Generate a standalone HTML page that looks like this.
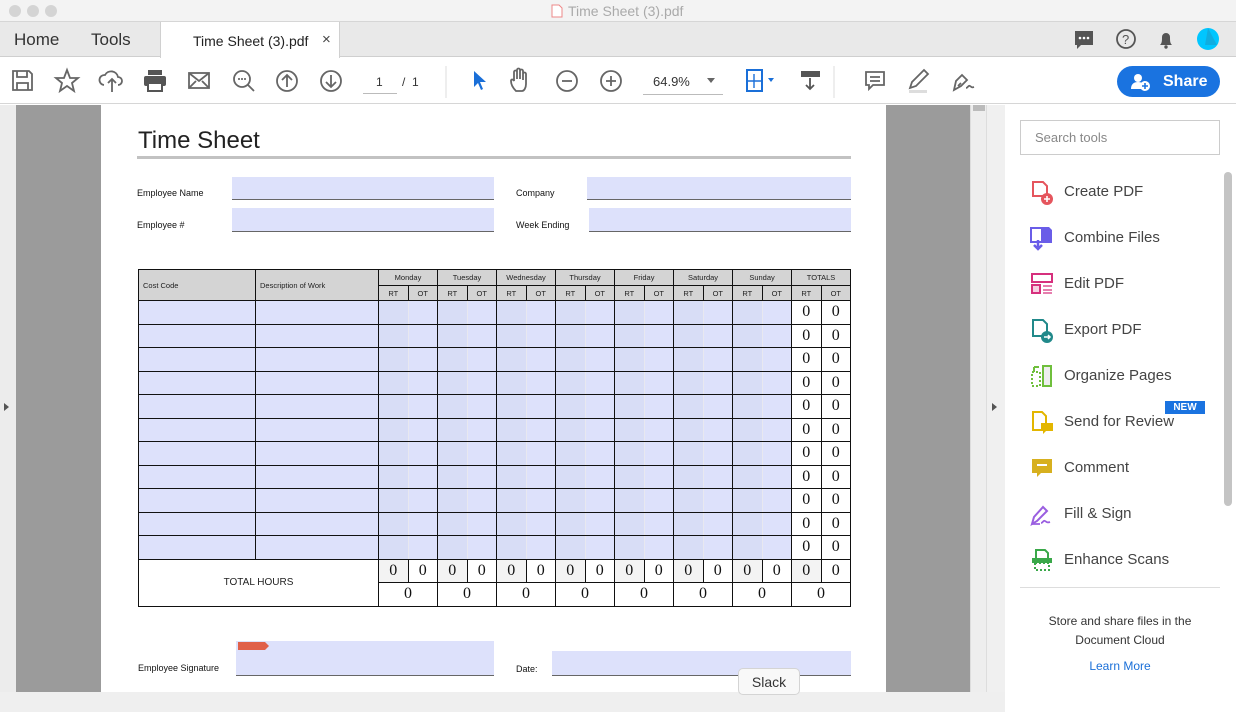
<!DOCTYPE html>
<html><head><meta charset="utf-8"><style>
*{margin:0;padding:0;box-sizing:border-box}
body{width:1236px;height:712px;overflow:hidden;position:relative;background:#fff;font-family:"Liberation Sans",sans-serif;color:#333}
.a{position:absolute}
#title{top:0;left:0;width:1236px;height:22px;background:#f3f3f3;border-bottom:1px solid #d6d6d6}
.dot{width:12px;height:12px;border-radius:50%;background:#d4d4d4;top:5px}
#tabs{top:22px;left:0;width:1236px;height:35px;background:#e9e9e9;border-bottom:1px solid #cfcfcf}
#tab{top:22px;left:160px;width:180px;height:36px;background:#fff;border-left:1px solid #d0d0d0;border-right:1px solid #d0d0d0}
#tb{top:58px;left:0;width:1236px;height:46px;background:#fff;border-bottom:1px solid #d6d6d6}
.ic{stroke:#666;fill:none;stroke-width:1.8}
#gray{top:105px;left:16px;width:954px;height:607px;background:#9b9b9b}
#page{top:105px;left:101px;width:785px;height:588px;background:#fff}
.lab{font-size:9px;color:#111}
.fld{background:#dde1fb;border-bottom:1px solid #666}
table{border-collapse:collapse;position:absolute;left:138px;top:269px;table-layout:fixed;width:713px}
td{border:1px solid #111;font-size:7.5px;color:#222;padding:0}
.h1 td{height:16px;background:#d4d4d4;text-align:center}
.h2 td{height:15px;background:#d4d4d4;text-align:center}
.b td{height:23.5px}
.f{background:#dde1fb}
.r{background:#d8ddf6;border-right:none}
.o{background:#dde1fb;border-left:1px solid #e8e8f0}
.z{font-family:"Liberation Serif",serif;font-size:16px;text-align:center;color:#111;background:#fff}
.zg{background:#f3f3f3}
#rp{top:105px;left:1005px;width:231px;height:607px;background:#fff}
.ti{left:1030px;font-size:15px;color:#444}
.ti span{position:absolute;left:34px;top:0;white-space:nowrap}
</style></head><body>
<div id="title" class="a"></div>
<div class="a" style="left:568px;top:3px;font-size:14px;color:#aaa">Time Sheet (3).pdf</div>
<div class="a dot" style="left:9px"></div><div class="a dot" style="left:27px"></div><div class="a dot" style="left:45px"></div>
<svg class="a" style="left:551px;top:4px" width="12" height="14"><path d="M1 1h7l3 3v9H1z" fill="#fff" stroke="#e88" /></svg>
<div id="tabs" class="a"></div>
<div id="tab" class="a"></div>
<div class="a" style="left:14px;top:30px;font-size:17px;color:#333">Home</div>
<div class="a" style="left:91px;top:30px;font-size:17px;color:#333">Tools</div>
<div class="a" style="left:193px;top:33px;font-size:14px;color:#222">Time Sheet (3).pdf</div>
<div class="a" style="left:322px;top:31px;font-size:15px;color:#444">×</div>
<svg class="a" style="left:1072px;top:28px" width="160" height="26">
<path d="M3 3h18v14h-12l-4 4v-4h-2z" fill="#555"/><circle cx="8" cy="10" r="1.3" fill="#fff"/><circle cx="12" cy="10" r="1.3" fill="#fff"/><circle cx="16" cy="10" r="1.3" fill="#fff"/>
<circle cx="54" cy="11" r="9" fill="none" stroke="#555" stroke-width="1.8"/><text x="50" y="16" font-size="13" fill="#555" font-family="Liberation Sans">?</text>
<path d="M88 17c2-2 2-4 2-8a4 4 0 0 1 8 0c0 4 0 6 2 8z" fill="#555"/><circle cx="94" cy="19" r="1.7" fill="#555"/>
<circle cx="136" cy="11" r="11" fill="#00c6ff"/><path d="M136 0l9 17h-12z" fill="#1a9ccc" opacity=".6"/>
</svg>
<div id="tb" class="a"></div>
<svg class="a" style="left:8px;top:66px" width="990" height="32">
<g class="ic" stroke="#aaa"><path d="M5 5h16l3 3v16H5z"/><path d="M9 5v6h10V5M9 24v-7h11v7"/></g>
<path class="ic" d="M59 4l3 8h8l-6 5 2 8-7-5-7 5 2-8-6-5h8z"/>
<g class="ic"><path d="M96 19a5 5 0 0 1 1-10 7 7 0 0 1 13 2 4 4 0 0 1 0 8M104 26V13M100 17l4-4 4 4"/></g>
<g fill="#555"><rect x="140" y="4" width="14" height="5"/><rect x="136" y="10" width="22" height="10" rx="2"/><rect x="140" y="17" width="14" height="8" fill="#fff" stroke="#555" stroke-width="2"/></g>
<g class="ic"><rect x="181" y="7" width="20" height="15"/><path d="M181 7l10 8 10-8M181 22l7-7M201 22l-7-7"/></g>
<g class="ic" stroke-width="2"><circle cx="234" cy="13" r="8"/><path d="M240 19l6 6"/></g><g fill="#555"><circle cx="231" cy="13" r="1"/><circle cx="234" cy="13" r="1"/><circle cx="237" cy="13" r="1"/></g>
<g class="ic" stroke="#bbb"><circle cx="279" cy="15" r="10"/><path d="M279 21V9M274 14l5-5 5 5"/><circle cx="323" cy="15" r="10"/><path d="M323 9v12M318 16l5 5 5-5"/></g>
<path d="M438 0v32" stroke="#ddd"/>
<path d="M466 5v16l4-4 3 7 2-1-3-7h6z" fill="#1a6fd8"/>
<path class="ic" d="M508 25c-3-3-5-7-5-10 0-2 2-2 3 0V6c0-2 3-2 3 0v7V4c0-2 3-2 3 0v9V5c0-2 3-2 3 0v9V8c0-2 3-2 3 0v10c0 4-2 7-4 7z"/>
<g class="ic"><circle cx="559" cy="15" r="10"/><path d="M554 15h10"/><circle cx="603" cy="15" r="10"/><path d="M598 15h10M603 10v10"/></g>
<g fill="#1a6fd8"><rect x="739" y="4" width="15" height="21" fill="none" stroke="#1a6fd8" stroke-width="2"/><path d="M746 8v14M740 15h13" stroke="#1a6fd8" stroke-width="1.4"/><path d="M760 12h6l-3 4z"/></g>
<g fill="#555"><rect x="793" y="5" width="19" height="6"/><path d="M802 12v11M798 19l4 4 4-4" stroke="#555" stroke-width="1.8" fill="none"/></g>
<path d="M826 0v32" stroke="#ddd"/>
<path class="ic" d="M858 6h18v13h-11l-4 4v-4h-3z M862 11h10M862 15h10"/>
<path class="ic" d="M902 22l2-6 12-12 4 4-12 12z"/><rect x="901" y="24" width="18" height="3" fill="#ddd"/>
<path class="ic" d="M946 24l2-9 6-6 5 5-6 6zM950 20l3-3M958 22c2 0 2-3 4-2s1 2 4 1"/>
</svg>
<div class="a" style="left:376px;top:75px;font-size:12px;color:#333">1</div>
<div class="a" style="left:363px;top:93px;width:34px;border-top:1px solid #bbb"></div>
<div class="a" style="left:402px;top:75px;font-size:12px;color:#333">/ &nbsp;1</div>
<div class="a" style="left:653px;top:74px;font-size:13px;color:#333">64.9%</div>
<div class="a" style="left:707px;top:78px;border:4px solid transparent;border-top:5px solid #666"></div>
<div class="a" style="left:643px;top:94px;width:80px;border-top:1px solid #bbb"></div>
<div class="a" style="left:1117px;top:66px;width:103px;height:31px;border-radius:16px;background:#1a73e0;color:#fff;font-size:16px;font-weight:bold;line-height:31px;padding-left:46px">Share</div>
<svg class="a" style="left:1130px;top:72px" width="24" height="20"><circle cx="8" cy="6" r="4" fill="#fff"/><path d="M1 17c0-5 3-7 7-7s6 2 6 3v4z" fill="#fff"/><circle cx="15" cy="14" r="5" fill="#fff"/><path d="M15 11v6M12 14h6" stroke="#1a73e0" stroke-width="1.6"/></svg>

<div class="a" style="top:105px;left:0;width:16px;height:607px;background:#ececec"></div>
<div class="a" style="left:4px;top:403px;border:4px solid transparent;border-left:5px solid #555"></div>
<div id="gray" class="a"></div>
<div id="page" class="a"></div>
<div class="a" style="top:105px;left:970px;width:16px;height:607px;background:#eee;border-left:1px solid #ddd"></div>
<div class="a" style="top:105px;left:973px;width:12px;height:6px;background:#bbb"></div>
<div class="a" style="top:105px;left:986px;width:19px;height:607px;background:#f0f0f0;border-left:1px solid #ddd"></div>
<div class="a" style="left:992px;top:403px;border:4px solid transparent;border-left:5px solid #555"></div>
<div class="a" style="top:692px;left:0;width:1005px;height:20px;background:#efefef"></div>

<div class="a" style="left:138px;top:127px;font-size:24px;color:#222">Time Sheet</div>
<div class="a" style="left:137px;top:156px;width:714px;height:3px;background:#c2c2c2"></div>
<div class="a lab" style="left:137px;top:188px">Employee Name</div>
<div class="a fld" style="left:232px;top:177px;width:262px;height:23px"></div>
<div class="a lab" style="left:137px;top:220px">Employee #</div>
<div class="a fld" style="left:232px;top:208px;width:262px;height:24px"></div>
<div class="a lab" style="left:516px;top:188px">Company</div>
<div class="a fld" style="left:587px;top:177px;width:264px;height:23px"></div>
<div class="a lab" style="left:516px;top:220px">Week Ending</div>
<div class="a fld" style="left:589px;top:208px;width:262px;height:24px"></div>

<table style="width:712px">
<colgroup><col style="width:117px"><col style="width:123px"><col span="16" style="width:29.5px"></colgroup>
<tr class="h1"><td rowspan="2" style="text-align:left;padding-left:4px">Cost Code</td><td rowspan="2" style="text-align:left;padding-left:4px">Description of Work</td><td colspan="2">Monday</td><td colspan="2">Tuesday</td><td colspan="2">Wednesday</td><td colspan="2">Thursday</td><td colspan="2">Friday</td><td colspan="2">Saturday</td><td colspan="2">Sunday</td><td colspan="2">TOTALS</td></tr>
<tr class="h2"><td>RT</td><td>OT</td><td>RT</td><td>OT</td><td>RT</td><td>OT</td><td>RT</td><td>OT</td><td>RT</td><td>OT</td><td>RT</td><td>OT</td><td>RT</td><td>OT</td><td>RT</td><td>OT</td></tr>
<tr class="b"><td class="f"></td><td class="f"></td><td class="r"></td><td class="o"></td><td class="r"></td><td class="o"></td><td class="r"></td><td class="o"></td><td class="r"></td><td class="o"></td><td class="r"></td><td class="o"></td><td class="r"></td><td class="o"></td><td class="r"></td><td class="o"></td><td class="z">0</td><td class="z">0</td></tr>
<tr class="b"><td class="f"></td><td class="f"></td><td class="r"></td><td class="o"></td><td class="r"></td><td class="o"></td><td class="r"></td><td class="o"></td><td class="r"></td><td class="o"></td><td class="r"></td><td class="o"></td><td class="r"></td><td class="o"></td><td class="r"></td><td class="o"></td><td class="z">0</td><td class="z">0</td></tr>
<tr class="b"><td class="f"></td><td class="f"></td><td class="r"></td><td class="o"></td><td class="r"></td><td class="o"></td><td class="r"></td><td class="o"></td><td class="r"></td><td class="o"></td><td class="r"></td><td class="o"></td><td class="r"></td><td class="o"></td><td class="r"></td><td class="o"></td><td class="z">0</td><td class="z">0</td></tr>
<tr class="b"><td class="f"></td><td class="f"></td><td class="r"></td><td class="o"></td><td class="r"></td><td class="o"></td><td class="r"></td><td class="o"></td><td class="r"></td><td class="o"></td><td class="r"></td><td class="o"></td><td class="r"></td><td class="o"></td><td class="r"></td><td class="o"></td><td class="z">0</td><td class="z">0</td></tr>
<tr class="b"><td class="f"></td><td class="f"></td><td class="r"></td><td class="o"></td><td class="r"></td><td class="o"></td><td class="r"></td><td class="o"></td><td class="r"></td><td class="o"></td><td class="r"></td><td class="o"></td><td class="r"></td><td class="o"></td><td class="r"></td><td class="o"></td><td class="z">0</td><td class="z">0</td></tr>
<tr class="b"><td class="f"></td><td class="f"></td><td class="r"></td><td class="o"></td><td class="r"></td><td class="o"></td><td class="r"></td><td class="o"></td><td class="r"></td><td class="o"></td><td class="r"></td><td class="o"></td><td class="r"></td><td class="o"></td><td class="r"></td><td class="o"></td><td class="z">0</td><td class="z">0</td></tr>
<tr class="b"><td class="f"></td><td class="f"></td><td class="r"></td><td class="o"></td><td class="r"></td><td class="o"></td><td class="r"></td><td class="o"></td><td class="r"></td><td class="o"></td><td class="r"></td><td class="o"></td><td class="r"></td><td class="o"></td><td class="r"></td><td class="o"></td><td class="z">0</td><td class="z">0</td></tr>
<tr class="b"><td class="f"></td><td class="f"></td><td class="r"></td><td class="o"></td><td class="r"></td><td class="o"></td><td class="r"></td><td class="o"></td><td class="r"></td><td class="o"></td><td class="r"></td><td class="o"></td><td class="r"></td><td class="o"></td><td class="r"></td><td class="o"></td><td class="z">0</td><td class="z">0</td></tr>
<tr class="b"><td class="f"></td><td class="f"></td><td class="r"></td><td class="o"></td><td class="r"></td><td class="o"></td><td class="r"></td><td class="o"></td><td class="r"></td><td class="o"></td><td class="r"></td><td class="o"></td><td class="r"></td><td class="o"></td><td class="r"></td><td class="o"></td><td class="z">0</td><td class="z">0</td></tr>
<tr class="b"><td class="f"></td><td class="f"></td><td class="r"></td><td class="o"></td><td class="r"></td><td class="o"></td><td class="r"></td><td class="o"></td><td class="r"></td><td class="o"></td><td class="r"></td><td class="o"></td><td class="r"></td><td class="o"></td><td class="r"></td><td class="o"></td><td class="z">0</td><td class="z">0</td></tr>
<tr class="b"><td class="f"></td><td class="f"></td><td class="r"></td><td class="o"></td><td class="r"></td><td class="o"></td><td class="r"></td><td class="o"></td><td class="r"></td><td class="o"></td><td class="r"></td><td class="o"></td><td class="r"></td><td class="o"></td><td class="r"></td><td class="o"></td><td class="z">0</td><td class="z">0</td></tr>
<tr class="b"><td colspan="2" rowspan="2" style="text-align:center;font-size:10px;background:#fff">TOTAL HOURS</td><td class="z zg">0</td><td class="z">0</td><td class="z zg">0</td><td class="z">0</td><td class="z zg">0</td><td class="z">0</td><td class="z zg">0</td><td class="z">0</td><td class="z zg">0</td><td class="z">0</td><td class="z zg">0</td><td class="z">0</td><td class="z zg">0</td><td class="z">0</td><td class="z zg">0</td><td class="z">0</td></tr>
<tr class="b"><td class="z" colspan="2">0</td><td class="z" colspan="2">0</td><td class="z" colspan="2">0</td><td class="z" colspan="2">0</td><td class="z" colspan="2">0</td><td class="z" colspan="2">0</td><td class="z" colspan="2">0</td><td class="z" colspan="2">0</td></tr>
</table>

<div class="a lab" style="left:138px;top:663px">Employee Signature</div>
<div class="a fld" style="left:236px;top:641px;width:258px;height:35px"></div>
<svg class="a" style="left:237px;top:641px" width="34" height="10"><path d="M1 1h27l4 4-4 4H1z" fill="#e0604a"/></svg>
<div class="a lab" style="left:516px;top:664px">Date:</div>
<div class="a fld" style="left:552px;top:651px;width:299px;height:25px"></div>
<div class="a" style="left:738px;top:668px;width:62px;height:27px;background:#f8f8f8;border:1px solid #d4d4d4;border-radius:5px;font-size:14px;color:#333;text-align:center;line-height:26px">Slack</div>

<div id="rp" class="a"></div>
<div class="a" style="left:1020px;top:120px;width:200px;height:35px;border:1px solid #ccc;font-size:13px;color:#888;line-height:33px;padding-left:14px">Search tools</div>
<div class="a" style="left:1020px;top:587px;width:200px;border-top:1px solid #ddd"></div>
<div class="a" style="left:1224px;top:172px;width:8px;height:334px;background:#c4c4c4;border-radius:4px"></div>
<div class="a ti" style="top:180px"><svg width="24" height="26"><path d="M3 2h10l4 4v10H3z" fill="#fff" stroke="#e5555d" stroke-width="2"/><circle cx="17" cy="19" r="6" fill="#e5555d"/><path d="M17 16v6M14 19h6" stroke="#fff" stroke-width="1.6"/></svg><span style="top:3px">Create PDF</span></div>
<div class="a ti" style="top:226px"><svg width="24" height="26"><rect x="1" y="2" width="11" height="14" fill="#fff" stroke="#6a5de8" stroke-width="2"/><path d="M13 1h6l3 3v13h-9z" fill="#6a5de8"/><path d="M8 14v7M4 19l4 4 4-4" stroke="#6a5de8" stroke-width="2.5" fill="none"/></svg><span style="top:3px">Combine Files</span></div>
<div class="a ti" style="top:272px"><svg width="24" height="26"><rect x="2" y="2" width="20" height="8" fill="#fff" stroke="#d6307d" stroke-width="2"/><rect x="2" y="13" width="8" height="8" fill="#f6d0e2" stroke="#d6307d" stroke-width="2"/><path d="M13 14h9M13 18h9M13 21h9" stroke="#d6307d" stroke-width="1.2"/></svg><span style="top:3px">Edit PDF</span></div>
<div class="a ti" style="top:318px"><svg width="24" height="26"><path d="M3 2h10l4 4v12H3z" fill="#fff" stroke="#21898a" stroke-width="2"/><circle cx="17" cy="19" r="6" fill="#21898a"/><path d="M14 19h6M18 17l2 2-2 2" stroke="#fff" stroke-width="1.5" fill="none"/></svg><span style="top:3px">Export PDF</span></div>
<div class="a ti" style="top:364px"><svg width="24" height="26"><rect x="2" y="8" width="8" height="14" fill="none" stroke="#6fbf3c" stroke-width="2" stroke-dasharray="2 2"/><rect x="13" y="2" width="8" height="20" fill="#eee" stroke="#6fbf3c" stroke-width="2"/><path d="M9 3L4 3M4 3v5" stroke="#6fbf3c" stroke-width="2" fill="none"/></svg><span style="top:3px">Organize Pages</span></div>
<div class="a ti" style="top:410px"><svg width="24" height="26"><path d="M3 2h9l4 4v14H3z" fill="#fff" stroke="#e3b600" stroke-width="2"/><path d="M11 13h12v8h-7l-3 3v-3h-2z" fill="#e3b600"/></svg><span style="top:3px">Send for Review</span></div>
<div class="a" style="left:1165px;top:401px;width:40px;height:13px;background:#1a73e0;color:#fff;font-size:10px;font-weight:bold;text-align:center;line-height:13px">NEW</div>
<div class="a ti" style="top:456px"><svg width="24" height="26"><path d="M2 3h20v14H11l-4 4v-4H2z" fill="#d7b01f"/><path d="M7 9h10" stroke="#fff" stroke-width="2"/></svg><span style="top:3px">Comment</span></div>
<div class="a ti" style="top:502px"><svg width="24" height="26"><path d="M2 22l2-7 9-10 4 4-10 10z" fill="none" stroke="#9a5ee0" stroke-width="2"/><path d="M2 22h8M11 21c2 0 2-3 4-2s2 2 5 1" stroke="#9a5ee0" stroke-width="1.8" fill="none"/></svg><span style="top:3px">Fill &amp; Sign</span></div>
<div class="a ti" style="top:548px"><svg width="24" height="26"><path d="M6 2h9l3 3v6H6z" fill="#fff" stroke="#3aa849" stroke-width="2"/><rect x="2" y="10" width="20" height="5" fill="#3aa849"/><rect x="5" y="15" width="14" height="7" fill="none" stroke="#3aa849" stroke-width="2" stroke-dasharray="2 2"/></svg><span style="top:3px">Enhance Scans</span></div>
<div class="a" style="left:1020px;top:612px;width:200px;text-align:center;font-size:12px;color:#333;line-height:19px">Store and share files in the Document Cloud</div>
<div class="a" style="left:1020px;top:659px;width:200px;text-align:center;font-size:12px;color:#1a6fd8">Learn More</div>
</body></html>
